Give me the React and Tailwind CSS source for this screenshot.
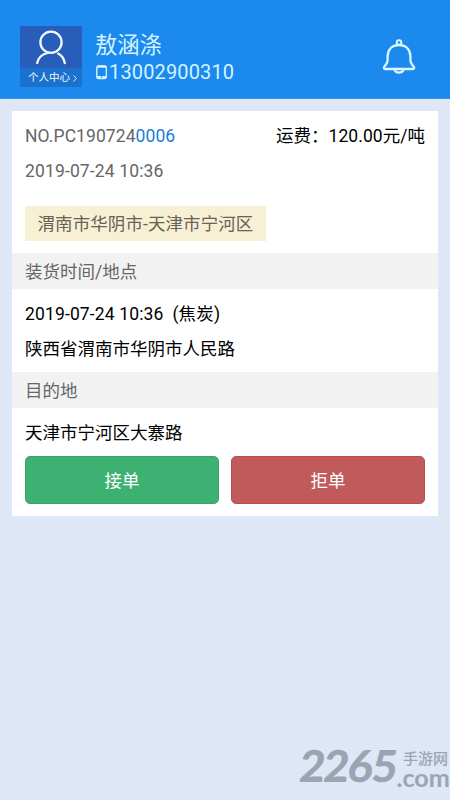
function PersonIcon() {
  return (
    <svg className="h-[36px] w-[32px]" viewBox="0 0 32 36" fill="none" stroke="#f0fbff" strokeWidth="2.3" strokeLinecap="round">
      <circle cx="16" cy="12.2" r="10.6" />
      <path d="M2.2 33C3.2 28 7 24.4 12.5 23M23 23.6C26.5 25.4 29 28.8 29.8 33" />
    </svg>
  );
}

function PhoneIcon() {
  return (
    <svg className="mr-[2px] h-[15px] w-[12px]" viewBox="0 0 12 15" fill="none" stroke="#d3f3ff">
      <rect x="1.8" y=".9" width="9.6" height="12.6" rx="1.8" strokeWidth="1.4" />
      <path d="M2.2 1.6H11M2.2 12H11" strokeWidth="2.2" />
      <path d="M5.8 12.2H7.4" stroke="#1c89ef" strokeWidth="1.2" />
    </svg>
  );
}

function BellIcon() {
  return (
    <svg className="h-[36px] w-[34px]" viewBox="0 0 34 36" fill="none" stroke="#d9f8ff" strokeWidth="2.3" strokeLinejoin="round" strokeLinecap="round">
      <circle cx="17" cy="3.6" r="2.3" strokeWidth="2" />
      <path d="M17 6C9.8 6 5.6 10.8 5.6 17.5V21C5.6 24.7 3.8 25.5 2.3 27.6C1.4 29 1.9 30 3.3 30H30.7C32.1 30 32.6 29 31.7 27.6C30.2 25.5 28.4 24.7 28.4 21V17.5C28.4 10.8 24.2 6 17 6Z" />
      <path d="M12.6 30.6C13 32.6 14.6 33.7 17 33.7S21 32.6 21.4 30.6" />
    </svg>
  );
}

function SectionTitle({ children }) {
  return <div className="flex h-9 items-center bg-[#f2f2f2] px-[13px] pt-[3px] text-[#666]">{children}</div>;
}

export default function App() {
  return (
    <div className="flex h-[800px] w-[450px] flex-col overflow-hidden bg-[#dde7f6] font-[Roboto,'Noto_Sans_CJK_SC',sans-serif] text-[17.5px] leading-none text-black">
      <header className="flex h-[99px] shrink-0 items-start border-b border-[#3c92e2] bg-[#1c89ef] pr-[34px] pl-5">
        <div className="mt-[26px] flex h-[61px] w-[62px] flex-col bg-[#285eb9]">
          <div className="flex h-[42px] items-center justify-center pt-[2px]">
            <PersonIcon />
          </div>
          <div className="flex h-[19px] items-center justify-center bg-[#1b71cd] pt-[2px] pl-[3px] text-[10.5px] whitespace-nowrap text-[#eefcff]">
            个人中心
            <svg className="ml-[3px] h-[7px] w-[4px]" viewBox="0 0 4 7" fill="none" stroke="#cfeaff">
              <path d="M.5 .5L3.4 3.5L.5 6.5" />
            </svg>
          </div>
        </div>
        <div className="mt-[31px] ml-[13px] flex flex-1 flex-col text-[#d3f3ff]">
          <div className="flex h-[28px] items-center text-[22.3px]">敖涵涤</div>
          <div className="flex h-[26px] items-center text-[20px] tracking-[0.14px]">
            <PhoneIcon />
            13002900310
          </div>
        </div>
        <div className="mt-[39px]">
          <BellIcon />
        </div>
      </header>

      <main className="mx-3 mt-3 mr-[12.5px] flex h-[405px] flex-col bg-white">
        <div className="flex h-12 items-center justify-between px-[13px] pr-[12.5px] pt-[3px]">
          <div className="tracking-[0.08px] text-[#666]">
            NO.PC190724<span className="text-[#197cdb]">0006</span>
          </div>
          <div className="tracking-[0.04px]">运费：120.00元/吨</div>
        </div>
        <div className="flex h-6 items-center px-[13px] pt-[2px] tracking-[0.14px] text-[#666]">2019-07-24 10:36</div>
        <div className="mt-[23px] mb-3 ml-[13px] flex h-[35px] w-[241px] items-center bg-[#f8f0d5] pt-[2px] pl-[12.5px] tracking-[0.08px] whitespace-nowrap text-[#666255]">
          渭南市华阴市-天津市宁河区
        </div>
        <SectionTitle>装货时间/地点</SectionTitle>
        <div className="flex h-[83px] flex-col px-[13px] pt-[8px]">
          <div className="flex h-[35px] items-center tracking-[0.14px] whitespace-pre">{'2019-07-24 10:36  (焦炭)'}</div>
          <div className="flex h-[35px] items-center">陕西省渭南市华阴市人民路</div>
        </div>
        <SectionTitle>目的地</SectionTitle>
        <div className="flex h-12 items-center px-[13px] pt-[3px]">天津市宁河区大寨路</div>
        <div className="grid grid-cols-2 gap-3 px-[13px] pr-[12.5px] text-white">
          <button className="h-12 rounded-[5px] border border-[#36a668] bg-[#3cb171] pt-[3px]">接单</button>
          <button className="h-12 rounded-[5px] border border-[#b94f50] bg-[#c15b5b] pt-[3px]">拒单</button>
        </div>
      </main>

      <footer className="mt-auto mb-[15px] flex h-[42px] items-end self-end text-[#9ca4b2]">
        <div className="font-[Lato,sans-serif] text-[44px] leading-[40px] font-black tracking-[-1.4px]">
          <span className="inline-block -skew-x-6">2265</span>
        </div>
        <div className="flex w-[54px] flex-col items-end gap-[3px]">
          <div className="pr-[2px] text-[15px] leading-[15px] font-medium">手游网</div>
          <div className="origin-right scale-x-105 font-[Lato,sans-serif] text-[24px] leading-[15px] font-bold">.com</div>
        </div>
      </footer>
    </div>
  );
}
